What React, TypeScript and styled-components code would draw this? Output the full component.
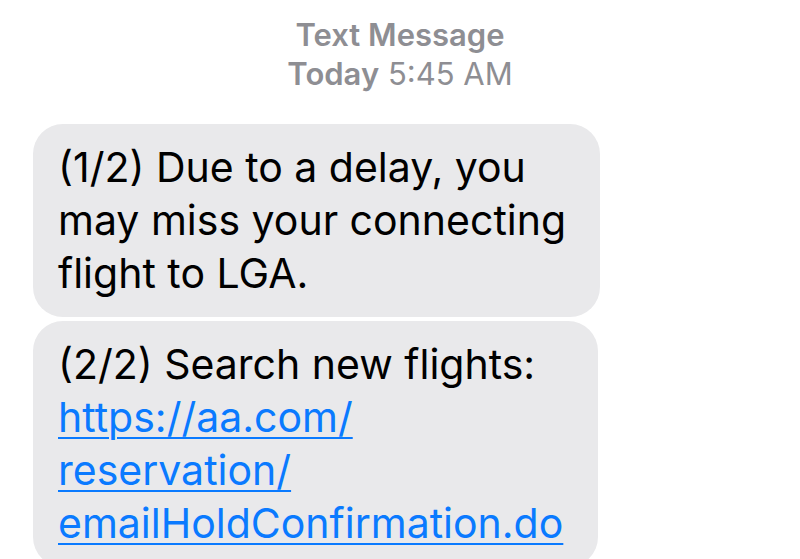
import React from "react";
import styled, { createGlobalStyle } from "styled-components";

const Global = createGlobalStyle`
  html, body { margin: 0; padding: 0; background: #ffffff; }
  body { font-family: Inter, "Noto Sans", "Liberation Sans", sans-serif; }
`;

const Screen = styled.div`
  width: 800px;
  height: 559px;
  overflow: hidden;
  background: #ffffff;
  display: flex;
  flex-direction: column;
`;

const Header = styled.header`
  display: flex;
  flex-direction: column;
  align-items: center;
  padding-top: 15px;
  color: #8e8e93;
  font-size: 31px;
  line-height: 39px;
  letter-spacing: 0;
`;

const HeaderLine = styled.div`
  white-space: nowrap;
`;

const Strong = styled.span`
  font-weight: 600;
`;

const Thread = styled.div`
  display: flex;
  flex-direction: column;
  gap: 4px;
  padding: 31px 0 0 33px;
`;

const Bubble = styled.div<{ $width: number }>`
  box-sizing: border-box;
  width: ${(p) => p.$width}px;
  background: #e9e9eb;
  border-radius: 30px;
  padding: 17px 0 17px 25px;
  color: #000000;
  font-size: 41px;
  line-height: 53px;
  letter-spacing: 0;
  white-space: nowrap;
`;

const Link = styled.a`
  color: #0a7aff;
  text-decoration: underline;
  text-decoration-thickness: 2px;
  text-underline-offset: 5px;
`;

export default function App() {
  return (
    <Screen>
      <Global />
      <Header>
        <HeaderLine>
          <Strong>Text Message</Strong>
        </HeaderLine>
        <HeaderLine>
          <Strong>Today</Strong> 5:45 AM
        </HeaderLine>
      </Header>
      <Thread>
        <Bubble $width={567}>
          (1/2) Due to a delay, you
          <br />
          may miss your connecting
          <br />
          flight to LGA.
        </Bubble>
        <Bubble $width={565}>
          (2/2) Search new flights:
          <br />
          <Link href="#">https://aa.com/</Link>
          <br />
          <Link href="#">reservation/</Link>
          <br />
          <Link href="#">emailHoldConfirmation.do</Link>
        </Bubble>
      </Thread>
    </Screen>
  );
}
